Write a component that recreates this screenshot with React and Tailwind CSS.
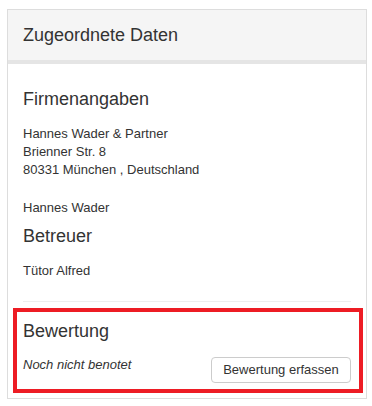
export default function App() {
  return (
    <div className="min-h-screen bg-white pt-[9px] pl-[7px] font-['Liberation_Sans',Arial,sans-serif] text-[#333]">
      <div className="w-[360px] border border-[#ddd] bg-white">
        {/* Header */}
        <div className="bg-[#f5f5f5] border-b-4 border-[#e5e5e5] px-[15px] py-[15px] text-[18px] leading-[20px]">
          Zugeordnete Daten
        </div>

        <div className="px-[15px] pt-[25px] pb-[5px]">
          <h3 className="text-[18px] leading-[20px]">Firmenangaben</h3>
          <div className="mt-[16px] text-[13px] leading-[18px]">
            <div>Hannes Wader &amp; Partner</div>
            <div>Brienner Str. 8</div>
            <div>80331 München , Deutschland</div>
          </div>
          <div className="mt-[20px] text-[13px] leading-[18px]">Hannes Wader</div>

          <h3 className="mt-[9px] text-[18px] leading-[20px]">Betreuer</h3>
          <div className="mt-[16px] text-[13px] leading-[18px]">Tütor Alfred</div>

          <hr className="mt-[21px] border-0 border-t border-[#eee]" />

          {/* Bewertung (highlighted) */}
          <div className="mt-[6px] ml-[-10px] mr-[-12px] border-4 border-[#ed1c24] pt-[9px] pl-[6px] pr-[8px] pb-[6px]">
            <h3 className="text-[18px] leading-[20px]">Bewertung</h3>
            <div className="mt-[15px] flex items-start justify-between">
              <span className="text-[13px] leading-[18px] italic">Noch nicht benotet</span>
              <button className="mt-px h-[26px] w-[140px] rounded-[4px] border border-[#ccc] bg-white text-[13px] leading-[18px] text-[#333]">
                Bewertung erfassen
              </button>
            </div>
          </div>
        </div>
      </div>
    </div>
  );
}
